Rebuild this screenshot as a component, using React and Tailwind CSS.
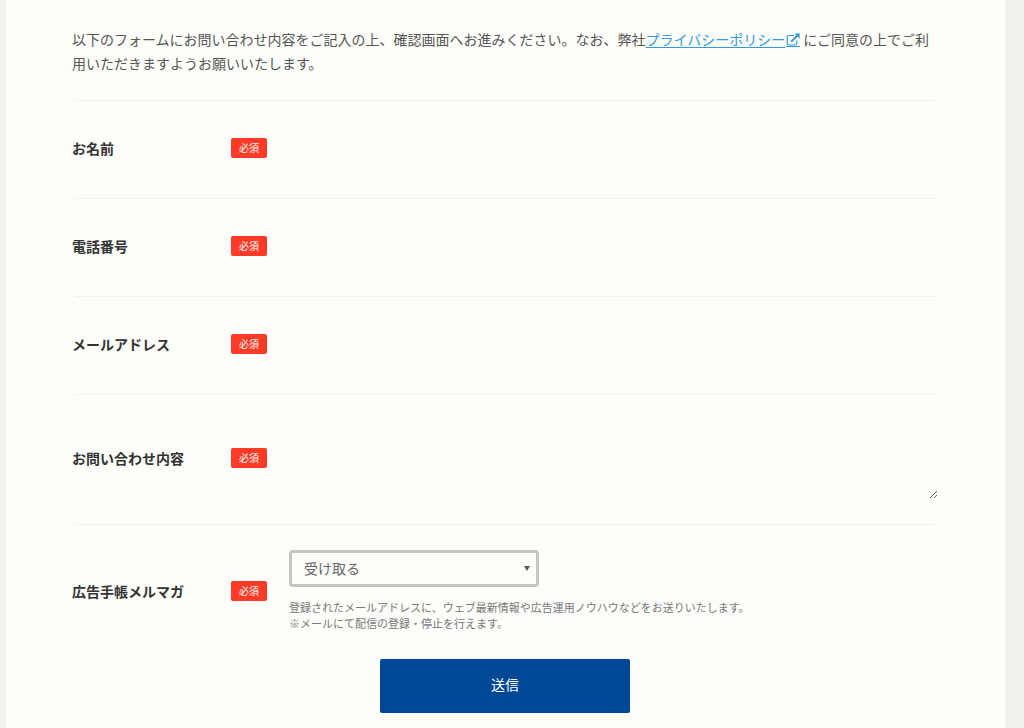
import React, { useState } from 'react';

const TEXT_FIELDS = [
  { id: 'name',  label: 'お名前',         type: 'text' },
  { id: 'tel',   label: '電話番号',       type: 'tel' },
  { id: 'email', label: 'メールアドレス', type: 'email' },
];

const FONT = "font-['Noto_Sans_CJK_JP','Liberation_Sans',sans-serif]";

function ExternalIcon() {
  return (
    <svg viewBox="0 0 14 14" className="inline-block w-[14px] h-[14px] ml-px align-[-2px]" fill="none" stroke="currentColor" aria-hidden="true">
      <path d="M8 2.5H3A1.8 1.8 0 0 0 1.2 4.3V10.2A1.8 1.8 0 0 0 3 12H9A1.8 1.8 0 0 0 10.8 10.2V7.8" strokeWidth="1.2" />
      <path d="M5.2 8.6L11.2 2.8" strokeWidth="2" />
      <path d="M8.4 0.6H13.6V5.8Z" fill="currentColor" stroke="none" />
      <path d="M0 13.5H14" />
    </svg>
  );
}

function FormRow({ id, label, height, children }) {
  return (
    <>
      <hr className="mx-[3px] border-[#f1f2ee]" />
      <div className={`flex items-center ${height}`}>
        <label htmlFor={id} className="w-[159px] shrink-0 text-sm font-bold text-[#333]">
          {label}
        </label>
        <span className="w-9 h-5 mr-[22px] shrink-0 rounded-xs bg-[#ff3a26] text-center text-[10px] leading-5 text-white">
          必須
        </span>
        <div className="flex-1 min-w-0">{children}</div>
      </div>
    </>
  );
}

export default function App() {
  const [form, setForm] = useState({ name: '', tel: '', email: '', message: '', magazine: 'yes' });

  const handleChange = (e) => setForm(p => ({ ...p, [e.target.id]: e.target.value }));

  return (
    <div className={`min-h-screen bg-[#f1f2ee] pl-[6px] pr-[19px] ${FONT}`}>
      <main className="min-h-screen bg-[#fdfefa] pl-[66px] pr-[67px] pt-[27px] pb-4">
        <p className="text-sm leading-6 text-[#555]">
          以下のフォームにお問い合わせ内容をご記入の上、確認画面へお進みください。なお、弊社
          <a href="#privacy" className="mr-[3px] text-[#3498db] underline underline-offset-2">
            プライバシーポリシー<ExternalIcon />
          </a>
          にご同意の上でご利用いただきますようお願いいたします。
        </p>

        <form className="mt-[25px]" onSubmit={(e) => e.preventDefault()}>
          {TEXT_FIELDS.map(f => (
            <FormRow key={f.id} id={f.id} label={f.label} height="h-[97px] pb-1">
              <input
                id={f.id}
                type={f.type}
                required
                value={form[f.id]}
                onChange={handleChange}
                className="w-full h-9 px-3 bg-transparent text-sm text-[#555] outline-none"
              />
            </FormRow>
          ))}

          <FormRow id="message" label="お問い合わせ内容" height="h-[129px] pb-1">
            <textarea
              id="message"
              required
              value={form.message}
              onChange={handleChange}
              className="block w-full h-[82px] px-3 py-2 resize bg-transparent text-sm text-[#555] outline-none"
            />
          </FormRow>

          <FormRow id="magazine" label="広告手帳メルマガ" height="h-[131px]">
            <div className="relative w-[250px]">
              <select
                id="magazine"
                value={form.magazine}
                onChange={handleChange}
                className="block w-full h-[37px] pl-3 pr-6 pb-[2px] appearance-none rounded-sm border-[3px] border-[#c4c5c1] bg-transparent text-sm text-[#666]"
              >
                <option value="yes">受け取る</option>
                <option value="no">受け取らない</option>
              </select>
              <svg viewBox="0 0 6 5" className="absolute right-[9px] top-4 w-[6px] h-[5px] pointer-events-none" fill="#555" aria-hidden="true">
                <path d="M0 0H6L3 5Z" />
              </svg>
            </div>
            <p className="mt-3 text-[11px] leading-4 text-[#777]">
              登録されたメールアドレスに、ウェブ最新情報や広告運用ノウハウなどをお送りいたします。
              <br />
              ※メールにて配信の登録・停止を行えます。
            </p>
          </FormRow>

          <button type="submit" className="block w-[250px] h-[54px] mx-auto mt-[3px] pb-1 rounded-xs bg-[#004896] text-sm text-white">
            送信
          </button>
        </form>
      </main>
    </div>
  );
}
